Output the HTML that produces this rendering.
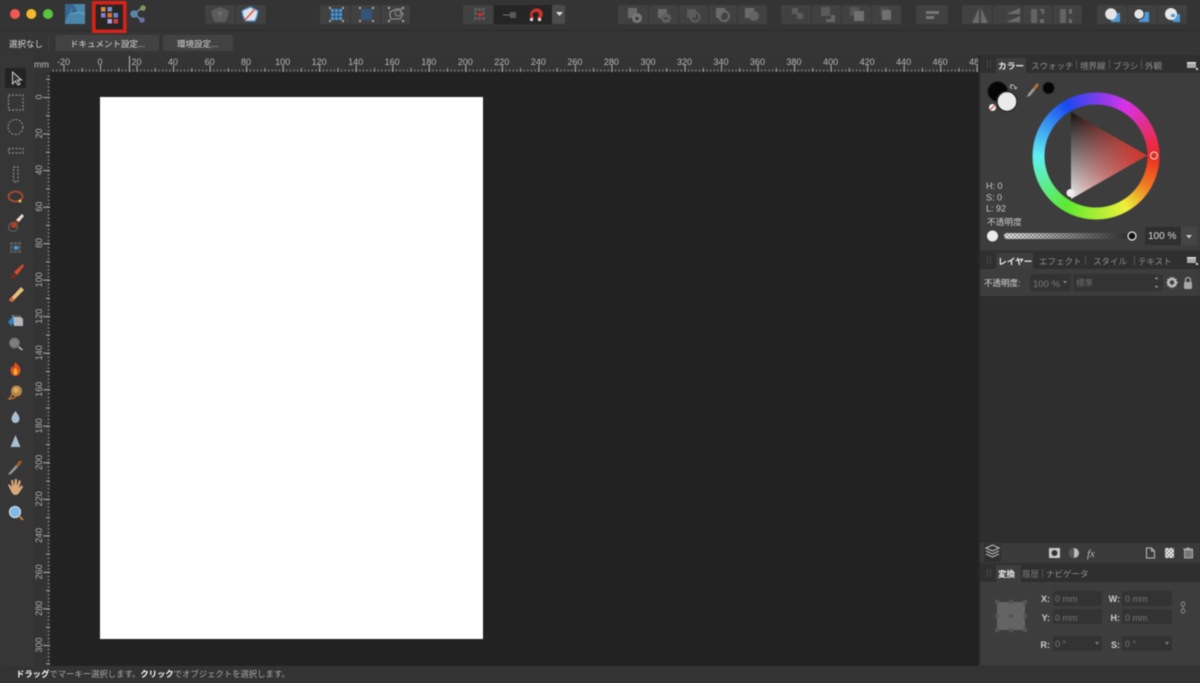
<!DOCTYPE html>
<html lang="ja"><head><meta charset="utf-8"><title>Affinity</title>
<style>html,body{margin:0;padding:0;background:#333;width:1200px;height:683px;overflow:hidden}svg{display:block;filter:blur(.4px)}text{font-family:"Liberation Sans","Noto Sans CJK JP",sans-serif}</style></head>
<body>
<svg xmlns="http://www.w3.org/2000/svg" width="1200" height="683" viewBox="0 0 1200 683">
<defs>
<clipPath id="hr"><rect x="50" y="55" width="928" height="18"/></clipPath>
<clipPath id="vr"><rect x="33" y="72" width="18" height="594"/></clipPath>
<linearGradient id="tv" x1="0" y1="0" x2="0" y2="1"><stop offset="0" stop-color="#111"/><stop offset="1" stop-color="#eee"/></linearGradient>
<linearGradient id="tr" x1="0" y1="0" x2="1" y2="0"><stop offset="0" stop-color="#d6322a" stop-opacity="0"/><stop offset="1" stop-color="#d6322a"/></linearGradient>
<pattern id="ck" width="4" height="4" patternUnits="userSpaceOnUse"><rect width="4" height="4" fill="#eee"/><rect width="2" height="2" fill="#999"/><rect x="2" y="2" width="2" height="2" fill="#999"/></pattern>
<linearGradient id="fade" x1="0" y1="0" x2="1" y2="0"><stop offset="0" stop-color="#2c2c2c" stop-opacity="0"/><stop offset="1" stop-color="#2c2c2c"/></linearGradient>
</defs>

<rect width="1200" height="683" fill="#353535"/>
<rect x="0" y="0" width="1200" height="30" fill="#343434"/>
<rect x="0" y="30" width="1200" height="1" fill="#2a2a2a"/>
<rect x="0" y="31" width="1200" height="24" fill="#353535"/>
<rect x="0" y="55" width="978" height="611" fill="#363636"/>
<rect x="33" y="55" width="945" height="17" fill="#343434"/>
<rect x="33" y="55" width="17" height="611" fill="#333"/>
<rect x="50" y="72" width="928" height="594" fill="#222"/>
<rect x="100" y="97" width="383" height="542" fill="#fff"/>
<rect x="0" y="666" width="1200" height="17" fill="#333"/>

<!-- traffic -->
<circle cx="15" cy="14" r="5" fill="#ee5a52"/><circle cx="31.300" cy="14" r="5" fill="#f3b92e"/><circle cx="48" cy="14" r="5" fill="#58c43c"/>
<!-- personas -->
<path d="M65 4h20v20h-20z" fill="#4a86aa"/>
<path d="M65 4h8l-3 8-5 9zM73 4l5 8-7 1 2-9z" fill="#35678f"/><path d="M71 14l8-2 6 2" fill="none" stroke="#6fa5c4"/>
<rect x="93.800" y="2.800" width="31" height="28.500" fill="#272626" stroke="#d92218" stroke-width="3.500"/>
<rect x="101" y="7" width="4.500" height="4.500" fill="#e08a3c"/><rect x="107.500" y="7" width="4.500" height="4.500" fill="#7f8fd0"/>
<rect x="101" y="13" width="4.500" height="4.500" fill="#8c7fd0"/><rect x="107.500" y="13" width="4.500" height="4.500" fill="#e0702a"/><rect x="113.500" y="13" width="4.500" height="4.500" fill="#6a88d0"/>
<rect x="107.500" y="19" width="4.500" height="4.500" fill="#b2a0e0"/><rect x="113.500" y="19" width="4.500" height="4.500" fill="#d0403a"/>
<path d="M134 14l9-7M134 14l8 6" stroke="#6f8fa8" stroke-width="1.500"/>
<circle cx="134" cy="14" r="3.800" fill="#5a87a8"/><circle cx="143" cy="8" r="2.800" fill="#7f9a5a"/><circle cx="142" cy="20" r="2.800" fill="#6870a8"/>

<!-- toolbar groups -->
<g fill="#414141">
<rect x="205" y="5" width="61" height="19" rx="2"/>
<rect x="320" y="5" width="90" height="19" rx="2"/>
<rect x="463" y="5" width="30" height="19" rx="2"/>
<rect x="552" y="5" width="13" height="19" rx="2" fill="#4b4b4b"/>
<rect x="618" y="5" width="149" height="19" rx="2"/>
<rect x="781" y="5" width="120" height="19" rx="2"/>
<rect x="916" y="5" width="32" height="19" rx="2"/>
<rect x="962" y="5" width="120" height="19" rx="2"/>
<rect x="1097" y="5" width="90" height="19" rx="2"/>
</g>
<rect x="494" y="5" width="58" height="19" fill="#252525"/>
<g stroke="#353535" stroke-width="1">
<path d="M235.500 5v19M350.500 5v19M380.500 5v19M648.500 5v19M678.500 5v19M708.500 5v19M737.500 5v19M811.500 5v19M841.500 5v19M871.500 5v19M992.500 5v19M1022.500 5v19M1052.500 5v19M1127.500 5v19M1157.500 5v19"/>
</g>
<!-- pentagons -->
<path d="M220 8l6 2.500 2 1.500-1.500 5-2 4h-9l-2-4-1.500-5 2-1.500z" fill="#5c5c5c" stroke="#5c5c5c" stroke-width="2" stroke-linejoin="round"/><path d="M220 12v5M218 14l2-2 2 2" stroke="#777" fill="none"/>
<path d="M250.500 7l5 2.500 2.500 1.500-1 5-2 5h-9.500l-2.500-5-1-5 2.500-1.500z" fill="#dce3ea" stroke="#4f8fcb" stroke-width="1.300" stroke-linejoin="round"/><path d="M245 20l10-11" stroke="#e0523f" stroke-width="1.500"/>
<!-- transforms -->
<g fill="#4f97d6"><rect x="331" y="9" width="11" height="11"/></g>
<path d="M334.500 9v11M338.500 9v11M331 12.500h11M331 16.500h11" stroke="#2f4a60"/>
<g fill="#aaa"><rect x="329" y="7" width="2" height="2"/><rect x="342" y="7" width="2" height="2"/><rect x="329" y="20" width="2" height="2"/><rect x="342" y="20" width="2" height="2"/><rect x="359" y="7" width="2" height="2"/><rect x="372" y="7" width="2" height="2"/><rect x="359" y="20" width="2" height="2"/><rect x="372" y="20" width="2" height="2"/><rect x="388" y="7" width="2" height="2"/><rect x="402" y="7" width="2" height="2"/><rect x="388" y="20" width="2" height="2"/><rect x="402" y="20" width="2" height="2"/></g>
<rect x="361" y="9" width="11" height="11" fill="#34547a"/>
<path d="M390 12l6-3h5v3l2 2-3 5h-9l-1-3z" fill="none" stroke="#888" stroke-width="1.300"/><circle cx="398" cy="13" r="3" fill="none" stroke="#888"/>
<!-- snapping -->
<g fill="#5e5a5a"><rect x="474" y="8" width="3" height="3"/><rect x="478" y="8" width="3" height="3"/><rect x="482" y="8" width="3" height="3"/><rect x="474" y="12" width="3" height="3"/><rect x="482" y="12" width="3" height="3"/><rect x="474" y="17" width="3" height="3"/><rect x="478" y="17" width="3" height="3"/><rect x="482" y="17" width="3" height="3"/></g>
<rect x="478" y="13" width="4" height="3" fill="#e0252a"/>
<path d="M503 15h8" stroke="#777"/><rect x="510" y="12" width="6" height="6" fill="#5a5a5a"/>
<path d="M533 19l-2-2c-2-3 1-7 4-8 3-1 6 1 7 3 1 2 0 5-2 7l-2-2c1-1 2-3 1-4-1-2-3-2-5-1s-3 3-1 5z" fill="#d3322a" stroke="#d3322a" stroke-width=".8"/><rect x="530" y="18" width="3" height="3" fill="#ddd"/><rect x="538" y="18" width="3" height="3" fill="#ddd"/>
<path d="M556 12h7l-3.500 4z" fill="#ddd"/>
<!-- boolean -->
<g fill="#6a6a6a">
<rect x="628" y="8" width="9" height="10"/><rect x="658" y="9" width="9" height="9"/>
<rect x="687" y="9" width="9" height="9" fill="#5a5a5a"/>
<path d="M716 8h9v4a6 6 0 0 0-4 6h-5z"/><path d="M745 8h9v4a6 6 0 0 0-4 6h-5z"/>
<rect x="792" y="8" width="6" height="6" fill="#5c5c5c"/><rect x="797" y="13" width="6" height="6" fill="#5c5c5c"/>
<rect x="821" y="7" width="9" height="9" fill="#5a5a5a"/><path d="M831 15h4v7h-9v-3h5z" fill="#666"/>
<rect x="850" y="7" width="9" height="9" fill="#555"/><rect x="854" y="11" width="10" height="10" fill="#707070"/>
<rect x="880" y="7" width="9" height="9" fill="#4d4d4d"/><rect x="882" y="10" width="9" height="10" fill="#707070"/>
</g>
<circle cx="637" cy="18" r="5" fill="#777"/><path d="M635 18.500h4M637 16.500v4" stroke="#222"/>
<circle cx="666" cy="18" r="5" fill="#606060"/><path d="M664 18.500h4" stroke="#222"/>
<circle cx="695" cy="17" r="4.500" fill="none" stroke="#5d5d5d" stroke-width="2"/>
<circle cx="724" cy="16" r="5" fill="none" stroke="#6a6a6a" stroke-width="2"/>
<circle cx="754" cy="16" r="5" fill="#636363"/>
<!-- align -->
<path d="M926 11h13v3h-13zM926 16h8v3h-8z" fill="#767676"/>
<path d="M979 8v15h-7zM981 8l7 15h-7z" fill="#6a6a6a"/>
<path d="M1020 8v6h-14zM1020 16v6h-14z" fill="#6a6a6a"/>
<rect x="1031" y="9" width="6" height="14" fill="#636363"/><path d="M1040 9h4v5h-2v-3h-2zM1040 19h4v4h-4z" fill="#6a6a6a"/>
<rect x="1060" y="9" width="6" height="14" fill="#636363"/><path d="M1069 9h3v5h-3zM1069 19h3v4h-3z" fill="#6a6a6a"/>
<!-- wrap -->
<rect x="1111" y="13" width="9" height="9" fill="#4f97d6"/><circle cx="1111" cy="14" r="5.800" fill="#e4e4e4"/>
<rect x="1139" y="12" width="10" height="10" fill="#4f97d6"/><circle cx="1139" cy="14" r="5.200" fill="#e4e4e4" stroke="#333"/>
<path d="M1171 14h9v8h-7z" fill="#4f97d6"/><circle cx="1171" cy="14" r="6" fill="#e8e8e8"/><rect x="1171" y="14" width="4" height="3" fill="#4f97d6"/>

<!-- context bar -->
<text x="9" y="47" font-size="8.500" fill="#ddd">選択なし</text>
<rect x="48" y="37" width="1" height="13" fill="#444"/>
<rect x="56" y="35" width="103" height="16" rx="2" fill="#424242"/>
<rect x="163" y="35" width="70" height="16" rx="2" fill="#424242"/>
<text x="70" y="47" font-size="8.500" fill="#ddd">ドキュメント設定...</text>
<text x="177" y="47" font-size="8.500" fill="#ddd">環境設定...</text>

<!-- rulers -->
<text x="34" y="67.500" font-size="9" fill="#c0c0c0">mm</text>
<g stroke="#a8a8a8">
<path d="M52.500 70.500H978" stroke-width="1.500" stroke-dasharray="1 2.653"/>
<path d="M63.470 70H978" stroke-width="4" stroke-dasharray="1 17.265"/>
<path d="M63.470 68.500H978" stroke-width="7" stroke-dasharray="1 35.530"/>
<path d="M48.500 75.500V666" stroke-width="1.500" stroke-dasharray="1 2.653"/>
<path d="M48 78.740V666" stroke-width="4" stroke-dasharray="1 17.265"/>
<path d="M46.500 97V666" stroke-width="7" stroke-dasharray="1 35.530"/>
</g>
<rect x="129" y="56" width="1" height="16" fill="#bbb"/>
<g clip-path="url(#hr)" font-size="9" fill="#b8b8b8" text-anchor="middle">
<text x="63.500" y="65">-20</text><text x="100" y="65">0</text><text x="136.500" y="65">20</text><text x="173" y="65">40</text><text x="209.600" y="65">60</text><text x="246" y="65">80</text><text x="282.700" y="65">100</text><text x="319.200" y="65">120</text><text x="355.700" y="65">140</text><text x="392.200" y="65">160</text><text x="428.800" y="65">180</text><text x="465.300" y="65">200</text><text x="501.800" y="65">220</text><text x="538.400" y="65">240</text><text x="574.900" y="65">260</text><text x="611.400" y="65">280</text><text x="648" y="65">300</text><text x="684.500" y="65">320</text><text x="721" y="65">340</text><text x="757.500" y="65">360</text><text x="794" y="65">380</text><text x="830.600" y="65">400</text><text x="867.100" y="65">420</text><text x="903.700" y="65">440</text><text x="940.200" y="65">460</text><text x="976.700" y="65">480</text>
</g>
<g clip-path="url(#vr)" font-size="9" fill="#b0b0b0" text-anchor="middle">
<text x="42" y="97" transform="rotate(-90 42 97)">0</text><text x="42" y="133.500" transform="rotate(-90 42 133.500)">20</text><text x="42" y="170" transform="rotate(-90 42 170)">40</text><text x="42" y="206.600" transform="rotate(-90 42 206.600)">60</text><text x="42" y="243" transform="rotate(-90 42 243)">80</text><text x="42" y="279.700" transform="rotate(-90 42 279.700)">100</text><text x="42" y="316.200" transform="rotate(-90 42 316.200)">120</text><text x="42" y="352.700" transform="rotate(-90 42 352.700)">140</text><text x="42" y="389.200" transform="rotate(-90 42 389.200)">160</text><text x="42" y="425.800" transform="rotate(-90 42 425.800)">180</text><text x="42" y="462.300" transform="rotate(-90 42 462.300)">200</text><text x="42" y="498.800" transform="rotate(-90 42 498.800)">220</text><text x="42" y="535.400" transform="rotate(-90 42 535.400)">240</text><text x="42" y="571.900" transform="rotate(-90 42 571.900)">260</text><text x="42" y="608.400" transform="rotate(-90 42 608.400)">280</text><text x="42" y="645" transform="rotate(-90 42 645)">300</text>
</g>

<!-- tools -->
<rect x="5" y="68" width="21" height="20" rx="2" fill="#232323"/>
<path d="M12.500 72v12l3-3 2.500 4 2-1-2.500-4h4z" fill="#333" stroke="#ccc"/>
<g fill="none" stroke="#8a8a8a" stroke-dasharray="2 1.500" stroke-width="1.200">
<rect x="8.500" y="95" width="14.500" height="15"/>
<circle cx="15.500" cy="127" r="7.500"/>
<rect x="8.500" y="148.500" width="14.500" height="4.500"/>
<rect x="13.500" y="167" width="4.500" height="15"/>
</g>
<ellipse cx="15.500" cy="196.500" rx="7" ry="5" fill="none" stroke="#a84a34" stroke-width="1.800"/><circle cx="20" cy="201" r="1.500" fill="#e8c24a"/>
<path d="M10 227l6-7 3 2-5 6z" fill="#8a2e1a"/><path d="M16 220l6-6 2 2-5 6z" fill="#e8ddd0"/><circle cx="14" cy="225" r="3" fill="#b83a20"/><circle cx="13" cy="227" r="4.500" fill="none" stroke="#666"/>
<g fill="#5a5a5a"><rect x="10" y="242" width="3" height="3"/><rect x="14" y="242" width="3" height="3"/><rect x="18" y="242" width="3" height="3"/><rect x="10" y="246" width="3" height="3"/><rect x="18" y="246" width="3" height="3"/><rect x="10" y="250" width="3" height="3"/><rect x="14" y="250" width="3" height="3"/><rect x="18" y="250" width="3" height="3"/></g>
<rect x="14" y="246" width="4" height="3.500" fill="#3f9cf0"/>
<path d="M9 279l4-6 4 3-4 3z" fill="#6c3020"/><path d="M14 272l9-8 1 2-7 9z" fill="#d94a30"/>
<path d="M9 300l12-13 3 3-12 12z" fill="#e8c27a"/><path d="M9 300l3-3 3 3-3 2z" fill="#e06a40"/>
<path d="M12 315l7 0 4 4v7h-9z" fill="#b4b8bc"/><path d="M8 322l5-6 1 6-3 4z" fill="#2f7fc6"/><rect x="13" y="315" width="8" height="2" fill="#555"/>
<circle cx="14.500" cy="343" r="5" fill="#7d7d7d" stroke="#666"/><path d="M18.500 347l4 3" stroke="#bbb" stroke-width="1.500"/>
<path d="M15.500 362c2 3 5 5 5 8s-2 6-5 6-5-3-5-6c0-2 1-3 2-4 0 1 1 2 1 2 0-2 1-4 2-6z" fill="#e0501e"/><path d="M15.500 368c1 1 2 3 2 4s-1 3-2 3-2-1-2-3 1-3 2-4z" fill="#f3b030"/>
<circle cx="16.500" cy="391" r="5.500" fill="#b8884a"/><path d="M12 394c-1 3-2 4-3 5 3 0 6-1 8-4" fill="none" stroke="#b8703a" stroke-width="1.500"/><circle cx="16" cy="390" r="2.500" fill="#d8b060"/>
<path d="M15.500 411c2 3 4 5 4 8a4 4 0 0 1-8 0c0-3 2-5 4-8z" fill="#a8bfd0"/>
<path d="M15.500 435l5 12h-10z" fill="#a8bfcf"/>
<path d="M9 473l7-8 2 2-7 7-3 1z" fill="#999"/><path d="M16 465l3-4c1-1 3 0 3 1l-2 3-2 2z" fill="#9a5a2a"/>
<path d="M11 491l-3-6 1-1 3 3-1-7 2 0 1 6 1-7 2 0 0 7 2-6 2 1-2 7 3-3 1 2-4 6c-2 3-6 3-8-2z" fill="#d8a878"/>
<circle cx="15" cy="512" r="5.500" fill="#7fb8e8" stroke="#c8d8e8" stroke-width="1.300"/><path d="M19 516l4 4" stroke="#c88a3a" stroke-width="1.800"/>

<!-- status -->
<text x="16" y="677" font-size="8.350" fill="#aaa"><tspan fill="#fff" font-weight="bold">ドラッグ</tspan>でマーキー選択します。<tspan fill="#fff" font-weight="bold">クリック</tspan>でオブジェクトを選択します。</text>

<!-- right panel -->
<rect x="978" y="55" width="222" height="611" fill="#333"/>
<rect x="978" y="55" width="2" height="611" fill="#282828"/>
<rect x="980" y="55" width="220" height="18" fill="#2f2f2f"/>
<rect x="996" y="58" width="30" height="15" fill="#3e3e3e"/>
<rect x="980" y="73" width="220" height="177" fill="#3d3d3d"/>
<path d="M987.500 60v8M990.500 60v8" stroke="#4a4a4a"/>
<text x="998" y="69" font-size="8.700" font-weight="bold" fill="#eee">カラー</text>
<text x="1031" y="69" font-size="8.500" fill="#8f8f8f">スウォッチ</text>
<text x="1080" y="69" font-size="8.500" fill="#8f8f8f">境界線</text>
<text x="1113" y="69" font-size="8.500" fill="#8f8f8f">ブラシ</text>
<text x="1145" y="69" font-size="8.500" fill="#8f8f8f">外観</text>
<path d="M1076.500 60v9M1109.500 60v9M1141.500 60v9" stroke="#555"/>
<rect x="1187" y="62" width="9" height="6" fill="#aaa"/><rect x="1187" y="62" width="9" height="1.500" fill="#ddd"/><rect x="1196" y="68" width="2" height="2" fill="#ddd"/>

<circle cx="997.700" cy="91.500" r="10" fill="#050505" stroke="#2a2a2a"/>
<circle cx="1007" cy="101.500" r="10" fill="#ebebeb" stroke="#2a2a2a" stroke-width="1.500"/>
<circle cx="992.500" cy="107.500" r="3.500" fill="#eee"/><path d="M990 110l5-5" stroke="#d9443a" stroke-width="1.200"/>
<path d="M1010 85c3-1 5 1 6 4M1016 89l-2-1M1016 89l1-2M1012 89l-2-2 2-2" fill="none" stroke="#aaa"/>
<path d="M1028 94l5-6 2 2-5 6-3 1z" fill="#999"/><path d="M1033 88l4-5 2 2-4 5z" fill="#b8703a"/>
<circle cx="1048.500" cy="88" r="6" fill="#050505" stroke="#2e2e2e"/>

<foreignObject x="1032" y="92" width="128" height="128"><div xmlns="http://www.w3.org/1999/xhtml" style="width:128px;height:128px;border-radius:50%;background:conic-gradient(from 90deg,#ee2a22,#f07a20 30deg,#eef03a 60deg,#5eea30 120deg,#5ff0f0 180deg,#1a48f0 240deg,#d832e8 300deg,#ee2a22);-webkit-mask:radial-gradient(circle,transparent 51px,#000 52px,#000 63px,transparent 64px);mask:radial-gradient(circle,transparent 51px,#000 52px,#000 63px,transparent 64px)"></div></foreignObject>

<path d="M1071 112L1147 155.500L1071 199z" fill="url(#tv)"/>
<path d="M1071 112L1147 155.500L1071 199z" fill="url(#tr)"/>
<circle cx="1154" cy="155.500" r="3.500" fill="#d6322a" stroke="#f0d8d8" stroke-width="1"/>
<circle cx="1070.500" cy="193" r="4" fill="#ececec"/>

<g font-size="9" fill="#c8c8c8"><text x="986" y="189">H: 0</text><text x="986" y="200.500">S: 0</text><text x="986" y="211.500">L: 92</text></g>
<text x="987" y="225" font-size="8.700" fill="#d0d0d0">不透明度</text>
<circle cx="992.500" cy="236" r="5.500" fill="#ececec"/>
<rect x="1004" y="233" width="128" height="6" rx="3" fill="url(#ck)"/>
<rect x="1004" y="233" width="128" height="6" rx="3" fill="url(#fade)"/>
<circle cx="1132" cy="236" r="4" fill="#111" stroke="#eee" stroke-width="1.200"/>
<rect x="1145" y="227" width="52" height="18" rx="2" fill="#2f2f2f"/>
<rect x="1181" y="227" width="16" height="18" fill="#454545"/>
<text x="1148" y="239" font-size="10" fill="#ddd">100 %</text>
<path d="M1186 235h6l-3 3.500z" fill="#ccc"/>

<!-- layers -->
<rect x="980" y="250" width="220" height="19" fill="#2f2f2f"/>
<rect x="980" y="250" width="220" height="2" fill="#333"/>
<rect x="996" y="253" width="37" height="16" fill="#3e3e3e"/>
<path d="M987.500 256v8M990.500 256v8" stroke="#4a4a4a"/>
<text x="998" y="264.500" font-size="8.700" font-weight="bold" fill="#eee">レイヤー</text>
<text x="1039" y="264.500" font-size="8.500" fill="#8f8f8f">エフェクト</text>
<text x="1093" y="264.500" font-size="8.500" fill="#8f8f8f">スタイル</text>
<text x="1138" y="264.500" font-size="8.500" fill="#8f8f8f">テキスト</text>
<path d="M1085.500 256v9M1134.500 256v9" stroke="#555"/>
<rect x="1187" y="257" width="9" height="6" fill="#aaa"/><rect x="1187" y="257" width="9" height="1.500" fill="#ddd"/><rect x="1196" y="263" width="2" height="2" fill="#ddd"/>
<rect x="980" y="269" width="220" height="27" fill="#3d3d3d"/>
<rect x="980" y="296" width="220" height="247" fill="#2e2e2e"/>
<text x="984" y="286" font-size="8.500" fill="#ddd">不透明度:</text>
<rect x="1030" y="274" width="41" height="17" rx="2" fill="#333"/>
<rect x="1073" y="274" width="90" height="17" rx="2" fill="#333"/>
<text x="1033" y="287" font-size="9.500" fill="#7c7c7c">100 %</text>
<path d="M1063 281h4l-2 2.500z" fill="#888"/>
<text x="1076" y="286" font-size="8.500" fill="#6c6c6c">標準</text>
<path d="M1154.500 279l2-2 2 2zM1154.500 286l2 2 2-2z" fill="#999"/>
<circle cx="1172" cy="282.500" r="3.500" fill="none" stroke="#bbb" stroke-width="2.500"/>
<circle cx="1172" cy="282.500" r="5" fill="none" stroke="#bbb" stroke-width="1.200" stroke-dasharray="1.500 1.500"/>
<rect x="1184" y="282" width="8" height="7" rx="1" fill="#aaa"/><path d="M1185.500 282v-2a2.500 2.500 0 0 1 5 0v2" fill="none" stroke="#aaa" stroke-width="1.300"/>

<!-- layers footer -->
<rect x="980" y="543" width="220" height="20" fill="#3a3a3a"/>
<rect x="984" y="544" width="17" height="18" fill="#2f2f2f"/>
<path d="M986 548l6.500-3 6.500 3-6.500 3zM986 551l6.500 3 6.500-3M986 554l6.500 3 6.500-3" fill="none" stroke="#b8b8b8" stroke-width="1.200"/>
<rect x="1049" y="548" width="11" height="10" fill="#c8c8c8"/><circle cx="1054.500" cy="553" r="3" fill="#333"/>
<circle cx="1074" cy="553" r="5" fill="#bbb"/><path d="M1074 548a5 5 0 0 0 0 10z" fill="#555"/>
<text x="1087" y="557" font-size="11" font-style="italic" fill="#bbb" style="font-family:'Liberation Serif',serif">fx</text>
<path d="M1146.500 548h5l3 3v7h-8zM1151.500 548v3h3" fill="none" stroke="#bbb"/>
<rect x="1165" y="548" width="9" height="10" fill="url(#ck)"/>
<path d="M1184.500 550h8v8h-8zM1183 549h10M1186.500 548h3" fill="#777" stroke="#aaa"/>

<!-- transform -->
<rect x="980" y="563" width="220" height="19" fill="#2f2f2f"/>
<rect x="996" y="565" width="25" height="17" fill="#3e3e3e"/>
<path d="M987.500 569v8M990.500 569v8" stroke="#4a4a4a"/>
<text x="998" y="577" font-size="8.500" font-weight="bold" fill="#eee">変換</text>
<text x="1022" y="577" font-size="8.500" fill="#777">履歴</text>
<text x="1046" y="577" font-size="8.500" fill="#8f8f8f">ナビゲータ</text>
<path d="M1042.500 569v9" stroke="#555"/>
<rect x="980" y="582" width="220" height="83" fill="#3d3d3d"/>
<rect x="997" y="602" width="28" height="28" fill="#646464"/>
<g fill="#555"><rect x="995" y="600" width="4" height="4"/><rect x="1009" y="600" width="4" height="4"/><rect x="1023" y="600" width="4" height="4"/><rect x="995" y="614" width="4" height="4"/><rect x="1009" y="614" width="4" height="4"/><rect x="1023" y="614" width="4" height="4"/><rect x="995" y="628" width="4" height="4"/><rect x="1009" y="628" width="4" height="4"/><rect x="1023" y="628" width="4" height="4"/></g>
<g fill="#333"><rect x="1053" y="591" width="49" height="15" rx="2"/><rect x="1053" y="609" width="49" height="15" rx="2"/><rect x="1122" y="591" width="50" height="15" rx="2"/><rect x="1122" y="609" width="50" height="15" rx="2"/><rect x="1053" y="636" width="49" height="15" rx="2"/><rect x="1122" y="636" width="50" height="15" rx="2"/></g>
<g font-size="9" font-weight="bold" fill="#ccc" text-anchor="end"><text x="1050" y="602">X:</text><text x="1050" y="621">Y:</text><text x="1120" y="602">W:</text><text x="1120" y="621">H:</text><text x="1050" y="648">R:</text><text x="1120" y="648">S:</text></g>
<g font-size="9" fill="#777"><text x="1055" y="602">0 mm</text><text x="1055" y="621">0 mm</text><text x="1125" y="602">0 mm</text><text x="1125" y="621">0 mm</text><text x="1055" y="647">0 °</text><text x="1125" y="647">0 °</text></g>
<path d="M1095 642h4l-2 2.500zM1165 642h4l-2 2.500z" fill="#888"/>
<g fill="none" stroke="#888"><circle cx="1183" cy="604" r="2"/><circle cx="1183" cy="611" r="2"/><path d="M1183 606v3"/></g>
<rect x="978" y="665" width="222" height="18" fill="#333"/>
</svg>
</body></html>
